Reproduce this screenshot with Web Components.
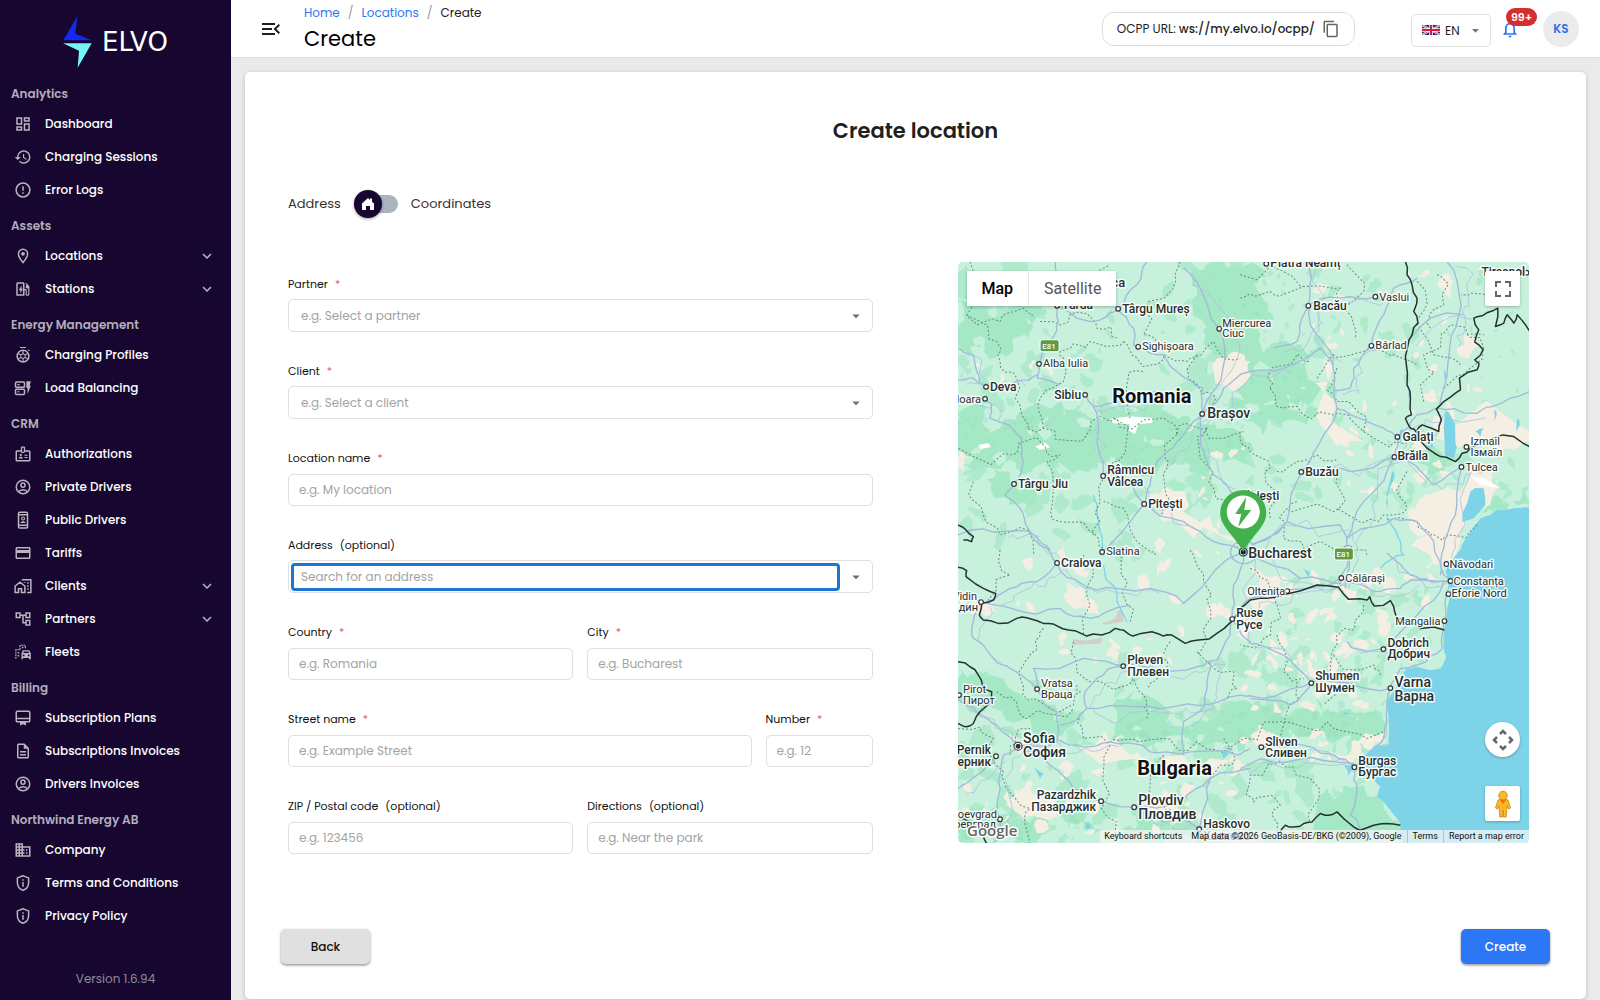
<!DOCTYPE html>
<html lang="en">
<head>
<meta charset="utf-8">
<title>Create location - Elvo</title>
<style>
  body { margin: 0; font-family: Poppins, Inter, "Noto Sans", sans-serif; font-size: 12px; color: #1f1f1f; background: #eaeaea; }
</style>
</head>
<body>
<elvo-app></elvo-app>
<script>
const define = (name, markup, setup) => customElements.define(name, class extends HTMLElement {
  connectedCallback() {
    if (this.shadowRoot) return;
    const root = this.attachShadow({ mode: 'open' });
    const t = document.createElement('template');
    t.innerHTML = '<style>*{box-sizing:border-box}button,input,select{font:inherit;color:inherit;margin:0}</style>' +
      (typeof markup === 'function' ? markup(this) : markup);
    root.append(t.content.cloneNode(true));
    if (setup) setup(this, root);
  }
});

/* ---------- icons (24 unit grid) ---------- */
const s = 'fill="none" stroke="currentColor" stroke-width="2"';
const person = `<circle cx="12" cy="12" r="9" ${s}/><circle cx="12" cy="9.5" r="2.7" ${s}/><path d="M6 18.500c1.500-2.300 3.500-3 6-3s4.500.7 6 3" ${s}/>`;
const shield = `<path d="M12 2.300 4.500 5.200v6c0 4.800 3.100 8.900 7.500 10.400 4.400-1.500 7.500-5.600 7.500-10.400v-6z" ${s}/><path d="M11 10.500h2V17h-2zM11 7h2v2h-2z"/>`;
const ICONS = {
  dashboard: '<path d="M19 5v2h-4V5h4M9 5v6H5V5h4m10 8v6h-4v-6h4M9 17v2H5v-2h4M21 3h-8v6h8V3zM11 3H3v10h8V3zm10 8h-8v10h8V11zm-10 4H3v6h8v-6z"/>',
  history: '<path d="M13 3a9 9 0 0 0-9 9H1l3.890 3.890.070.140L9 12H6c0-3.870 3.130-7 7-7s7 3.130 7 7-3.130 7-7 7c-1.930 0-3.680-.790-4.940-2.060l-1.420 1.420A8.954 8.954 0 0 0 13 21a9 9 0 0 0 0-18zm-1 5v5l4.280 2.540.720-1.210-3.500-2.080V8H12z"/>',
  error: `<circle cx="12" cy="12" r="9.200" ${s}/><path d="M11 7h2v6h-2zM11 15h2v2h-2z"/>`,
  place: `<path d="M12 2.900a6.100 6.100 0 0 0-6.100 6.100c0 4.700 6.100 11.700 6.100 11.700s6.100-7 6.100-11.700A6.100 6.100 0 0 0 12 2.900z" ${s}/><circle cx="12" cy="9" r="2.500"/>`,
  station: `<path d="M19.770 7.230l.010-.010-3.720-3.720L15 4.560l2.110 2.110c-.940.360-1.610 1.260-1.610 2.330 0 1.380 1.120 2.500 2.500 2.500.360 0 .690-.080 1-.210v7.210c0 .550-.450 1-1 1s-1-.450-1-1V14c0-1.100-.900-2-2-2h-1V5c0-1.100-.900-2-2-2H5c-1.100 0-2 .900-2 2v16h11v-7.500h1.500v5c0 1.380 1.120 2.500 2.500 2.500s2.500-1.120 2.500-2.500V9c0-.690-.280-1.320-.730-1.770zM12 19H5V5h7z"/><path d="M8.500 18v-4.500h-2L10 6.500v5h2z"/>`,
  profile: `<circle cx="12" cy="13.500" r="7.800" ${s}/><circle cx="12" cy="13.500" r="3" fill="none" stroke="currentColor" stroke-width="1.300"/><path d="M8 2h8M19 5l1.500 1.500M12 6v5M5.500 10l4 2M5.500 17.500l4-2.500M12 21v-5M18.500 17.500l-4-2.500M18.500 10l-4 2" fill="none" stroke="currentColor" stroke-width="1.500"/>`,
  load: `<rect x="2" y="4" width="12" height="7" rx="1.500" ${s}/><rect x="2" y="13.500" width="12" height="7" rx="1.500" ${s}/><path d="M4.500 6.800h3v1.600h-3zM4.500 16.200h3v1.600h-3zM16.500 3h6l-1.700 6h1.700L18 20v-8h-1.500z"/>`,
  badge: `<path d="M10 8H4c-.6 0-1 .4-1 1v11c0 .6.4 1 1 1h16c.6 0 1-.4 1-1V9c0-.6-.4-1-1-1h-6" ${s}/><rect x="10" y="2.800" width="4" height="7" rx="1" fill="none" stroke="currentColor" stroke-width="1.700"/><circle cx="9" cy="13.300" r="1.500"/><path d="M6 18c0-1.600 1.500-2.200 3-2.200s3 .6 3 2.200zM14 13h4v1.400h-4zM14 16h4v1.400h-4z"/>`,
  person,
  kiosk: `<rect x="6" y="1.500" width="12" height="21" rx="1.500" ${s}/><path d="M6 4h12v2H6zM6 18h12v2H6z"/><circle cx="12" cy="10" r="2" fill="none" stroke="currentColor" stroke-width="1.500"/><path d="M8.500 16c.5-3 6.500-3 7 0z"/>`,
  card: '<path d="M20 4H4c-1.110 0-2 .890-2 2v12c0 1.110.890 2 2 2h16c1.110 0 2-.890 2-2V6c0-1.110-.890-2-2-2zm0 14H4v-6h16v6zm0-10H4V6h16v2z"/>',
  homework: `<path d="M1.500 20.500v-8.500l6.500-5 6.500 5v8.500h-4.500v-5H6v5z" ${s}/><path d="M10.500 3.800h12v16.700h-5" ${s}/><path d="M17.500 7h2v2h-2zM17.500 11h2v2h-2zM17.500 15h2v2h-2zM13 7h2v1h-2z"/>`,
  tree: '<path d="M22 11V3h-7v3H9V3H2v8h7V8h2v10h4v3h7v-8h-7v3h-2V8h2v3h7zM7 9H4V5h3v4zm10 6h3v4h-3v-4zm0-10h3v4h-3V5z"/>',
  fleet: `<path d="M2.500 21V9H8M8 9V3h7v5" fill="none" stroke="currentColor" stroke-width="1.500" stroke-dasharray="2.500 1"/><path d="M10.500 5h2v2h-2zM5 12h2v2H5zM5 16h2v2H5z"/><path d="m10 14 1.700-4.300h8.600L22.500 14v7.500H20V20h-8v1.500h-2z"/><path d="m12.300 13.300.8-2h6l.8 2z" fill="#170730"/><circle cx="12.800" cy="16.500" r="1.200" fill="#170730"/><circle cx="19.600" cy="16.500" r="1.200" fill="#170730"/>`,
  plan: `<rect x="3" y="3" width="18" height="14" rx="1.500" ${s}/><path d="M3 11.500h18v2H3zM8 16h8v6l-4-1.800L8 22z"/>`,
  doc: '<path d="M8 16h8v2H8zm0-4h8v2H8zm6-10H6c-1.100 0-2 .9-2 2v16c0 1.100.890 2 2 2h12c1.100 0 2-.9 2-2V8l-6-6zm4 18H6V4h7v5h5v11z"/>',
  company: '<path d="M12 7V3H2v18h20V7H12zM6 19H4v-2h2v2zm0-4H4v-2h2v2zm0-4H4V9h2v2zm0-4H4V5h2v2zm4 12H8v-2h2v2zm0-4H8v-2h2v2zm0-4H8V9h2v2zm0-4H8V5h2v2zm10 12h-8v-2h2v-2h-2v-2h2v-2h-2V9h8v10zm-2-8h-2v2h2v-2zm0 4h-2v2h2v-2z"/>',
  shield,
  expand: '<path d="M16.590 8.590 12 13.170 7.410 8.590 6 10l6 6 6-6z"/>',
  collapse: '<path d="M3 18h13v-2H3v2zm0-5h10v-2H3v2zm0-7v2h13V6H3zm18 9.590L17.420 12 21 8.410 19.590 7l-5 5 5 5L21 15.590z"/>',
  bell: '<path d="M12 22c1.100 0 2-.9 2-2h-4c0 1.100.9 2 2 2zm6-6v-5c0-3.070-1.630-5.640-4.500-6.320V4c0-.830-.670-1.500-1.500-1.500s-1.500.670-1.500 1.500v.680C7.640 5.360 6 7.920 6 11v5l-2 2v1h16v-1l-2-2zm-2 1H8v-6c0-2.480 1.510-4.500 4-4.500s4 2.020 4 4.500v6z"/>',
  copy: '<path d="M16 1H4c-1.100 0-2 .9-2 2v14h2V3h12V1zm3 4H8c-1.100 0-2 .9-2 2v14c0 1.100.9 2 2 2h11c1.100 0 2-.9 2-2V7c0-1.100-.9-2-2-2zm0 16H8V7h11v14z"/>',
  caret: '<path d="m7 10 5 5 5-5z"/>'
};
const icon = (n, size = 18) => `<svg width="${size}" height="${size}" viewBox="0 0 24 24" fill="currentColor" aria-hidden="true">${ICONS[n]}</svg>`;

/* ---------- sidebar ---------- */
define('nav-item', el => `
  <style>
    :host { display: block; }
    a { display: flex; align-items: center; height: 33px; padding: 0 14px; gap: 13px; color: #fff; font-weight: 500; text-decoration: none; }
    svg { color: #b9b5c0; flex: none; }
    .label { flex: 1; }
  </style>
  <a href="#">${icon(el.getAttribute('icon'))}<span class="label"><slot></slot></span>${el.hasAttribute('more') ? icon('expand', 18) : ''}</a>`);

define('nav-section', el => `
  <style>
    :host { display: block; }
    h2 { margin: 0; padding: 6px 11px 0; font-size: 12px; line-height: 27px; font-weight: 600; color: #b3aebb; }
  </style>
  <h2>${el.getAttribute('heading')}</h2><slot></slot>`);

define('app-sidebar', `
  <style>
    :host { display: flex; flex-direction: column; background: #170730; }
    .logo { display: flex; align-items: center; justify-content: center; gap: 10px; height: 74px; padding-top: 10px; color: #fff; font-family: "DejaVu Sans", sans-serif; font-size: 26px; }
    nav { display: flex; flex-direction: column; margin-right: 1px; }
    footer { margin-top: auto; text-align: center; line-height: 20px; padding-bottom: 11px; color: #8f889b; }
  </style>
  <div class="logo"><svg width="29" height="52" viewBox="173 50 87 154"><path d="M216 50 174 122h85l-49-20z" fill="#1726f5"/><path d="M173 131h86l-42 73 4-51z" fill="#77f4f8"/></svg><span>ELVO</span></div>
  <nav>
    <nav-section heading="Analytics"><nav-item icon="dashboard">Dashboard</nav-item><nav-item icon="history">Charging Sessions</nav-item><nav-item icon="error">Error Logs</nav-item></nav-section>
    <nav-section heading="Assets"><nav-item icon="place" more>Locations</nav-item><nav-item icon="station" more>Stations</nav-item></nav-section>
    <nav-section heading="Energy Management"><nav-item icon="profile">Charging Profiles</nav-item><nav-item icon="load">Load Balancing</nav-item></nav-section>
    <nav-section heading="CRM"><nav-item icon="badge">Authorizations</nav-item><nav-item icon="person">Private Drivers</nav-item><nav-item icon="kiosk">Public Drivers</nav-item><nav-item icon="card">Tariffs</nav-item><nav-item icon="homework" more>Clients</nav-item><nav-item icon="tree" more>Partners</nav-item><nav-item icon="fleet">Fleets</nav-item></nav-section>
    <nav-section heading="Billing"><nav-item icon="plan">Subscription Plans</nav-item><nav-item icon="doc">Subscriptions Invoices</nav-item><nav-item icon="person">Drivers Invoices</nav-item></nav-section>
    <nav-section heading="Northwind Energy AB"><nav-item icon="company">Company</nav-item><nav-item icon="shield">Terms and Conditions</nav-item><nav-item icon="shield">Privacy Policy</nav-item></nav-section>
  </nav>
  <footer>Version 1.6.94</footer>`);

/* ---------- top bar ---------- */
define('app-topbar', `
  <style>
    :host { display: flex; align-items: center; height: 58px; padding: 0 21px 0 28px; background: #fff; border-bottom: 1px solid #dfdfdf; }
    button { border: 0; background: none; padding: 0; display: flex; cursor: pointer; }
    .title { margin-left: 21px; flex: 1; }
    .crumbs { display: flex; gap: 8px; line-height: 20px; color: #9a9a9a; }
    .crumbs a { color: #2f74f2; text-decoration: none; }
    .crumbs b { font-weight: 400; color: #222; }
    h1 { margin: 0; font-size: 21px; line-height: 31px; font-weight: 400; color: #000; }
    .url { display: flex; align-items: center; height: 34px; padding: 0 14px; border: 1px solid #dcdcdc; border-radius: 12px; gap: 3px; }
    .url strong { font-weight: 500; }
    .url button { color: #666; margin-left: 4px; }
    .lang { display: flex; align-items: center; height: 33px; width: 80px; margin: 3px 9px 0 56px; padding: 0 6px 0 10px; border: 1px solid #dfdfdf; border-radius: 5px; }
    .lang select { appearance: none; border: 0; background: none; outline: 0; padding: 0 0 0 5px; flex: 1; min-width: 0; }
    .lang svg:last-child { color: #777; }
    .bell { position: relative; color: #2f74f2; margin-right: 23px; }
    .bell span { position: absolute; left: 6px; top: -11px; width: 31px; height: 18px; border-radius: 9px; background: #d32f2f; color: #fff; font-size: 11px; line-height: 18px; font-weight: 600; text-align: center; }
    .avatar { width: 36px; height: 36px; border-radius: 50%; background: #ebebeb; color: #2f6ff0; font-weight: 600; align-items: center; justify-content: center; }
  </style>
  <button aria-label="Collapse menu">${icon('collapse', 24)}</button>
  <div class="title">
    <nav class="crumbs"><a href="#">Home</a><span>/</span><a href="#">Locations</a><span>/</span><b>Create</b></nav>
    <h1>Create</h1>
  </div>
  <div class="url"><span>OCPP URL:</span><strong>ws://my.elvo.io/ocpp/</strong><button aria-label="Copy">${icon('copy', 18)}</button></div>
  <div class="lang">
    <svg width="18" height="10" viewBox="0 0 36 20"><path fill="#1c2f7c" d="M0 0h36v20H0z"/><path d="m0 0 36 20M36 0 0 20" stroke="#fff" stroke-width="4"/><path d="m0 0 36 20M36 0 0 20" stroke="#d0203a" stroke-width="1.500"/><path d="M18 0v20M0 10h36" stroke="#fff" stroke-width="7"/><path d="M18 0v20M0 10h36" stroke="#d0203a" stroke-width="4"/></svg>
    <select aria-label="Language"><option>EN</option></select>${icon('caret', 17)}
  </div>
  <button class="bell" aria-label="Notifications">${icon('bell', 20)}<span>99+</span></button>
  <button class="avatar">KS</button>`);

/* ---------- form pieces ---------- */
define('form-field', el => {
  const a = n => el.getAttribute(n);
  const kind = a('kind') || 'text';
  const mark = el.hasAttribute('required') ? '<i>*</i>' : el.hasAttribute('optional') ? '<span>(optional)</span>' : '';
  const control = kind === 'select'
    ? `<select id="c"><option>${a('placeholder')}</option></select>${icon('caret', 18)}`
    : kind === 'search'
    ? `<input id="c" type="text" placeholder="${a('placeholder')}"><button aria-label="Open">${icon('caret', 18)}</button>`
    : `<input id="c" type="text" placeholder="${a('placeholder')}">`;
  return `
  <style>
    :host { display: flex; flex-direction: column; justify-content: space-between; height: 57px; min-width: 0; }
    label { display: flex; gap: 7px; font-size: 11px; line-height: 18px; color: #111; }
    i { font-style: normal; color: #f25555; }
    .box { display: flex; align-items: center; height: 32px; border: 1px solid #dfdfdf; border-radius: 5px; color: #6f6f6f; background: #fff; }
    .select, .search { height: 33px; }
    input, select { flex: 1; min-width: 0; height: 30px; padding: 0 10px; border: 0; outline: 0; background: none; appearance: none; color: #a3a3a3; border-radius: 5px; }
    input::placeholder { color: #a3a3a3; opacity: 1; }
    select { padding-left: 12px; }
    svg { margin-right: 7px; flex: none; display: block; }
    button { border: 0; background: none; padding: 0; }
    .search input { height: 28px; margin: 0 7px 0 2px; padding: 0 7px; border: 3px solid #1b76d3; border-radius: 4px; }
  </style>
  <label for="c">${a('label')}${mark}</label>
  <div class="box ${kind}">${control}</div>`;
});

define('mode-switch', `
  <style>
    :host { display: flex; align-items: center; gap: 13px; height: 28px; font-size: 13px; color: #333; }
    .switch { position: relative; display: block; width: 44px; height: 28px; }
    input { position: absolute; left: 10px; top: 5px; width: 34px; height: 18px; appearance: none; border-radius: 9px; background: #a9b4be; }
    .thumb { position: absolute; left: 0; top: 0; width: 28px; height: 28px; border-radius: 50%; background: #170730; box-shadow: 0 1px 3px #0006; pointer-events: none; display: flex; align-items: center; justify-content: center; }
  </style>
  <label for="m"><slot name="off"></slot></label>
  <span class="switch"><input id="m" type="checkbox" role="switch"><span class="thumb"><svg width="14" height="14" viewBox="0 0 14 14"><path d="M7 1 1 6.500V13h4V9h4v4h4V6.500l-2-1.800V1.500H9V3z" fill="#fff"/></svg></span></span>
  <label for="m"><slot name="on"></slot></label>`);

define('action-button', `
  <style>
    :host { display: block; }
    button { width: 89px; height: 35px; border: 0; border-radius: 5px; background: var(--face, #e0e0e0); color: var(--ink, #111); font-weight: 500; box-shadow: 0 1px 3px #0005, 0 2px 2px #0002; }
  </style>
  <button><slot></slot></button>`);

/* ---------- map ---------- */
/* Terrain coordinates use three units per pixel; labels use plain pixels. */
let seed = 11;
const rnd = () => (seed = (seed * 16807) % 2147483647) / 2147483647;
const rough = (pts, amp, closed, depth = 2) => {
  let p = [];
  for (let i = 0; i < pts.length; i += 2) p.push([pts[i], pts[i + 1]]);
  for (let d = 0; d < depth; d++) {
    const q = [];
    const n = closed ? p.length : p.length - 1;
    for (let i = 0; i < n; i++) {
      const a = p[i], b = p[(i + 1) % p.length];
      const len = Math.hypot(a[0] - b[0], a[1] - b[1]);
      q.push(a, [(a[0] + b[0]) / 2 + (rnd() - .5) * len * amp, (a[1] + b[1]) / 2 + (rnd() - .5) * len * amp]);
    }
    if (!closed) q.push(p[p.length - 1]);
    p = q;
  }
  return 'M' + p.map(v => v.map(Math.round).join(' ')).join('L') + (closed ? 'z' : '');
};
const scatter = (x0, y0, x1, y1, n, size) => {
  let d = '';
  for (let i = 0; i < n; i++) {
    const cx = x0 + rnd() * (x1 - x0), cy = y0 + rnd() * (y1 - y0), rx = size * (.3 + rnd()), ry = rx * (.3 + rnd() * .5), tilt = rnd() * 3;
    const pts = [];
    for (let k = 0; k < 7; k++) {
      const t = k / 7 * Math.PI * 2, r = .55 + rnd() * .7, x = Math.cos(t) * rx * r, y = Math.sin(t) * ry * r;
      pts.push(cx + x * Math.cos(tilt) - y * Math.sin(tilt), cy + x * Math.sin(tilt) + y * Math.cos(tilt));
    }
    d += rough(pts, .5, true, 1);
  }
  return d;
};
const shift = (dx, dy, arr) => arr.map((v, i) => v + (i % 2 ? dy : dx));

const FOREST = [
  [24,500,110,460,150,520,230,460,330,440,400,475,490,455,600,455,700,480,740,500,850,520,900,560,890,630,780,640,700,600,640,620,560,650,480,600,420,650,330,620,240,650,170,620,80,660,24,640],
  [24,140,60,120,110,160,130,190,270,160,290,180,240,230,190,290,150,300,100,270,60,300,24,270],
  [720,40,860,30,960,60,970,180,930,240,960,300,1000,330,980,400,1105,480,1000,500,940,540,880,490,840,400,820,300,760,230,740,120],
  [500,1370,640,1350,760,1400,860,1340,960,1350,1100,1370,1200,1380,1290,1400,1315,1430,1200,1440,1100,1430,1000,1440,900,1460,800,1460,700,1440,600,1470,480,1450],
  [24,1240,110,1270,220,1330,320,1370,380,1400,240,1390,120,1350,24,1330],
  [24,1690,100,1650,200,1690,330,1670,420,1700,480,1764,24,1764],
  [600,1700,700,1680,820,1740,830,1764,500,1764,520,1720],
  [1130,1600,1240,1590,1310,1670,1350,1730,1350,1764,1200,1764,1100,1740],
  [1590,790,1640,720,1737,690,1737,757,1640,765],
  [960,270,1080,300,1110,390,1080,480,1000,440,940,360],
  [130,640,260,690,230,760,120,700], [1380,570,1470,590,1480,650,1430,660],
  [1320,1310,1300,1350,1310,1450,1180,1390,1100,1330,1200,1360]
];
const BEIGE = [
  [1400,740,1490,700,1560,640,1640,640,1640,700,1560,780,1530,860,1500,940,1450,930,1380,870,1430,840,1370,760],
  [800,310,850,290,900,320,890,380,820,390], [1120,320,1150,330,1140,500,1240,560,1110,510], [590,720,640,690,700,770,800,820,870,880,730,850,640,800],
  [180,1590,260,1620,340,1660,250,1680,170,1650], [380,1470,500,1455,560,1490,700,1500,860,1490,860,1520,700,1530,560,1510],
  [560,1640,640,1600,680,1700,620,1690], [24,590,80,600,40,650,24,640], [900,930,980,960,1000,1010,940,1080,890,1030],
  [1450,480,1737,530,1737,560,1680,580,1600,580,1500,550], [1480,60,1510,80,1500,130,1470,100], [1540,240,1580,260,1560,300,1520,280],
  [350,980,400,1000,410,1060,370,1060], [480,1150,510,1170,500,1220,470,1190], [1470,500,1510,510,1480,560,1440,530]
];
/* The open-water side runs past the frame so that only the coast shows. */
const SEA = [1960,757,1850,755,1737,757,1680,762,1640,765,1590,790,1560,830,1530,885,1510,910,1485,950,1500,1000,1490,1060,1482,1120,1480,1180,1487,1205,1470,1240,1440,1245,1400,1235,1370,1240,1350,1270,1340,1290,1310,1340,1315,1400,1315,1470,1280,1472,1250,1500,1240,1530,1270,1575,1290,1595,1280,1625,1320,1665,1350,1705,1355,1764,1360,1960,1960,1960];
const LAKES = [
  [1560,710,1600,700,1605,750,1570,790,1535,800,1550,745],
  [1484,470,1494,470,1515,560,1510,610,1485,605],[1425,560,1445,545,1450,575,1430,580],[1630,465,1638,470,1632,500],[1700,490,1708,510,1696,530],
  [1575,530,1600,520,1590,545],[1325,650,1333,655,1318,700,1312,760,1308,720],[1480,340,1490,360,1482,375],[1372,405,1382,415,1374,430],
  [250,1535,280,1555,270,1570],[410,1700,425,1712,408,1725],[1180,1530,1215,1525,1195,1560],[1060,940,1078,950,1075,965],[1350,525,1362,525,1352,570],
  [810,1490,835,1490,820,1510],[1178,1370,1200,1375,1185,1380]
];
const ROADS = [
  [316,21,316,90,320,155,325,200,300,260,270,320,262,370,330,390],[320,155,380,190,450,195,505,165,450,120,360,70],[505,165,560,90,590,21],
  [505,162,550,220,550,270,640,300,680,350,757,400,757,476],[24,375,70,370,107,395,200,380,262,360],[24,280,70,300,90,380],[24,430,107,432,125,450,120,490,215,550,220,620,193,686,165,720,210,760,240,830,300,885],
  [405,419,430,455,440,560,459,664],[430,455,500,440,620,410],[459,664,500,660,582,747,700,800,790,860,881,890],[757,476,700,540,650,590,620,620,600,690,582,747,540,800,457,890],
  [757,476,750,570,780,640,830,690,881,750,890,890],[757,476,820,400,900,350,1000,340,1110,280,1150,330],[806,221,820,330,757,476],[806,221,750,100,700,40],
  [1073,21,1075,152,1080,210,1150,310,1150,400,1160,460,1120,540,1054,651,1010,800,881,890],[1075,152,1040,260,970,280],[1150,405,1200,400,1210,340,1262,272,1300,180,1330,100,1400,70],
  [1075,152,1170,130,1275,125],[1331,605,1240,740,1190,850,1190,885,1185,1000],[1054,651,1200,650,1331,605,1342,547,1300,520,1200,480,1160,460],[881,890,1010,800,1170,810,1190,850,1330,790,1400,800,1450,860,1480,960,1499,978],
  [1534,637,1515,780,1480,880,1470,960],[1342,547,1400,480,1460,460,1580,475,1640,450,1737,410],[1534,637,1450,690,1340,600],[1490,21,1530,140,1520,200,1500,260,1480,400,1470,450],[1370,260,1440,190,1540,180],
  [321,925,260,980,180,1000,130,1035,94,1040],[321,925,400,990,500,1000,600,1000,700,1045,881,890],[321,925,290,880,240,830,150,830,24,840],[1190,885,1170,985,1050,970,881,890],[1174,968,1270,1010,1350,1000,1380,975,1499,978],
  [1310,895,1380,960,1440,980,1499,978,1490,1010,1480,1099,1476,1180,1400,1230,1350,1240,1319,1300],[94,1040,70,1100,70,1150,130,1210,180,1240,262,1301,320,1370,320,1460,205,1472],
  [24,1330,80,1370,140,1410,205,1472,300,1530,370,1600,452,1637,551,1657,700,1630,780,1570,900,1540],[205,1472,300,1450,400,1475,480,1460,600,1490,720,1490,860,1500,900,1480],
  [205,1472,160,1500,150,1600,150,1692,130,1764],[518,1232,440,1270,405,1310,410,1360,330,1410],[410,1360,560,1355,640,1360,760,1350,870,1320,940,1330,1083,1283],[518,1232,600,1240,740,1235,800,1215,840,1140,846,1093],
  [780,1220,770,1300,765,1350,700,1400,700,1500],[846,1093,870,1130,900,1165,1000,1200,1083,1283,1200,1285,1319,1300],[1319,1300,1310,1360,1300,1450,1250,1500,1211,1536],[934,1477,1060,1470,1150,1500,1211,1536,1220,1600,1200,1680,1230,1720],
  [870,1540,934,1510,1060,1510,1211,1525],[551,1657,640,1700,700,1690,747,1723,780,1570],[881,890,850,990,846,1093],[846,1093,900,1030,1000,1005,1174,968],[24,1600,80,1560,140,1505],[1299,1181,1210,1180,1190,1160],
  [1083,1283,1020,1350,900,1330],[1299,1181,1400,1080,1480,980],[94,1040,200,1065,330,1060,420,1090,540,1050],[262,1301,250,1240,400,1210,518,1232]
];
const COUNTIES = [
  [60,21,50,180,150,200,220,160,250,190],[50,180,140,260,150,320,200,370,215,480,280,520,420,525,500,490,640,490,680,540,770,520,820,550,880,530],[280,520,270,430,340,380,330,290,420,260,520,260],
  [270,200,360,180,440,220,500,250],[520,260,560,310,640,300,720,310,790,260,870,310],[690,21,670,100,590,160,580,240,640,290],[540,490,530,390,580,350],[740,300,730,380,790,420,800,490],
  [24,500,60,600,180,600,280,570,330,600,310,700,330,800,420,830,460,880],[490,490,490,620,450,740,430,840],[460,740,520,760,560,860,620,900],[680,540,650,640,660,740,630,780],[770,520,750,610,790,700,850,760,860,880],[70,680,100,780,150,840,240,840,250,900],
  [870,130,960,110,1060,95,1170,100,1180,160,1210,250],[1100,370,1150,300,1240,290,1330,300,1400,330],[960,400,960,340,1080,320],[960,400,1000,460,1060,480,1150,480,1240,530,1340,560,1370,560],[1160,340,1160,440,1240,530],[870,530,900,590,960,640,980,740,960,790],
  [980,650,1050,620,1100,600,1160,610],[1160,670,1150,770,1010,760],[1370,650,1370,760,1300,780,1160,760],[1310,790,1400,800,1440,840,1500,840,1580,810],[1040,740,1000,850,1060,880,1200,870,1250,900],[1400,80,1410,180,1450,300,1530,330],[1420,440,1420,300,1500,210,1600,240],
  [1480,400,1560,340,1600,280,1550,240],[150,885,180,960,110,1040],[400,900,430,960,420,1050,400,1140],[560,885,530,990,540,1100],[720,885,760,960,780,1060,760,1130,740,1200],[280,1120,260,1180,220,1230,230,1330,320,1370,370,1350,380,1290],
  [370,1160,380,1250,420,1280,550,1270,590,1340,590,1390],[660,1160,650,1240,590,1300],[740,1190,850,1250,860,1300,830,1330],[140,1310,200,1340,230,1390,370,1360],[400,1370,400,1450,500,1455,640,1450,740,1460,880,1450,1000,1400,1130,1400,1300,1430],
  [24,1420,130,1450,160,1550,240,1660,240,1764],[480,1470,470,1600,500,1700,490,1764],[180,1500,200,1440,240,1420],[640,1500,640,1640,720,1700],[820,1450,840,1530,780,1570],[900,940,960,1000,960,1140,870,1170],
  [1240,1050,1230,1080,1180,1120,1150,1180,1170,1280],[980,1140,1000,1250,1060,1270],[1040,1280,1010,1370,1000,1530,1080,1570,1080,1700],[1150,1200,1270,1230,1290,1260],[990,1520,900,1560,910,1640,990,1650,980,1730],[1170,1250,1120,1350],
  [360,90,430,60,480,30],[870,60,1000,50,1060,95],[1190,30,1240,110,1180,160],[1460,60,1480,150,1440,220],[1540,120,1620,90,1700,110]
];
const BORDERS = [
  shift(870,0,[495,21,500,60,515,90,530,130,520,170,533,205,515,240,503,270,498,330,500,390,510,430,513,480,495,490,510,520,527,530,545,510,595,530,603,495,588,462,610,440,645,415,660,405,657,370,710,345,715,325,703,315,703,315,728,285,703,262,715,225,700,190,725,183,750,170,772,160,765,215,790,205,800,180,820,205,830,180,855,210,867,228]),
  shift(870,0,[527,530,560,580,600,605,645,620,665,595,690,580,760,550,820,545,867,575]),
  shift(0,885,[24,52,50,62,48,80,100,115,137,130,130,150,95,160,88,195,100,210,145,220,200,205,230,203,280,220,310,222,355,240,410,258,455,255,495,235,520,240,548,258,605,245,640,258,665,255,705,280,745,270,800,250,850,208,870,175,900,150,950,145,1010,132,1100,105,1165,112,1195,148,1250,150,1258,140,1272,168,1320,152,1330,170,1340,205,1410,235,1482,240]),
  shift(0,885,[24,335,60,350,85,375,100,415,125,425,118,460,90,485,70,520,50,530,24,520]),
  shift(870,885,[120,845,135,825,160,830,190,820,215,815,240,790,265,795,290,785,310,805,340,830,360,840,400,825,435,820,480,825]),
  [24,810,45,822,70,845,65,860,40,855], shift(0,885,[24,800,60,815,100,860,110,880])
];
/* text | x | baseline | size | anchor end? | marker x | marker y */
const PLACES = [
  ['Cluj-Napoca',167,25,13,1],['Turda',104,47,12,0,99,44],['Târgu Mureș',164,51,12,0,160,47],['Miercurea',264,65,11,0,261,67],['Ciuc',264,75,11],['Sighișoara',184,88,11,0,180,85],
  ['Alba Iulia',85,105,11,0,81,102],['Deva',32,129,12,0,28,125],['Sibiu',123,137,12,1,127,133],['Hunedoara',23,141,11,1,27,137],['Brașov',249,156,14,0,244,152],
  ['Râmnicu',149,212,12,0,145,214],['Vâlcea',149,224,12],['Târgu Jiu',60,226,12,0,56,222],['Pitești',190,246,12,0,186,242],['Slatina',148,293,11,0,144,290],
  ['Piatra Neamț',312,5,12,0,308,2],['Bacău',355,48,12,0,350,44],['Vaslui',421,39,11,0,417,35],['Bârlad',417,87,11,0,413,84],['Tiraspol',523,14,12,0,568,11],['Galați',444,179,12,0,439,175],
  ['Brăila',439,198,12,0,436,195],['Izmail',512,183,11,0,508,185],['Ізмаїл',512,194,11],['Tulcea',507,209,11,0,503,205],['Buzău',347,214,12,0,343,210],['Ploiești',321,238,12,1],['Bucharest',290,296,14],
  ['Craiova',103,305,12,0,99,301],['Vidin',19,338,11,1,23,340],['Видин',20,349,11,1],['Pleven',169,402,12,0,165,404],['Плевен',169,414,12],['Vratsa',83,425,11,0,79,427],['Враца',83,436,11],
  ['Pirot',5,431,11,0,1,433],['Пирот',5,442,11],['Sofia',65,481,14],['София',65,495,14],['Pernik',33,492,12,1,38,494],['Перник',33,504,12,1],['Pazardzhik',138,537,12,1,143,539],['Пазарджик',138,549,12,1],
  ['Plovdiv',180,543,14,0,176,545],['Пловдив',180,557,14],['Blagoevgrad',39,556,11,1,42,557],['Благоевград',38,566,11,1],['Haskovo',245,566,12,0,241,567],['Хасково',245,578,12],
  ['Năvodari',491,306,11,0,488,302],['Constanța',495,323,11,0,492,319],['Eforie Nord',493,335,11,0,490,332],['Călărași',387,320,11,0,383,316],['Oltenița',289,333,11,0,329,329],['Mangalia',482,363,11,1,486,359],
  ['Ruse',278,355,12,0,274,357],['Русе',278,367,12],['Dobrich',429,385,12,0,425,387],['Добрич',429,396,12],['Shumen',357,418,12,0,353,421],['Шумен',357,430,12],['Varna',436,425,14,0,432,426],['Варна',436,439,14],
  ['Sliven',307,484,12,0,303,485],['Сливен',307,495,12],['Burgas',400,503,12,0,396,505],['Бургас',400,514,12]
];
const paths = (list, attrs, amp, closed, depth) => `<path ${attrs} d="${list.map(p => rough(p, amp, closed, depth)).join('')}"/>`;
const shieldSign = (x, y) => `<rect x="${x}" y="${y}" width="19" height="12" rx="2" fill="#5c9a45" stroke="#fff"/><text x="${x + 9}" y="${y + 9}" font-size="8" text-anchor="middle" class="sign">E81</text>`;

function terrain() {
  return `
  <g transform="translate(-8 -7) scale(.33333)">
    <path d="M24 21h1713v1743H24z" fill="#c8f1dd"/>
    <path fill="#aeeacb" d="${scatter(30,30,300,440,40,40)}${scatter(300,30,700,430,14,30)}${scatter(30,430,900,900,60,42)}${scatter(700,30,900,430,20,40)}${scatter(900,30,1400,760,50,30)}${scatter(30,1200,1300,1764,130,42)}${scatter(870,960,1450,1300,60,26)}${scatter(1400,500,1700,760,28,26)}${scatter(1400,30,1737,450,20,14)}"/>
    ${paths(FOREST, 'fill="#a5e8c5"', .7, true, 3)}
    <path fill="#94dfb8" opacity=".4" d="${scatter(30,480,880,620,70,14)}${scatter(760,60,1080,480,50,14)}${scatter(480,1350,1280,1450,60,14)}${scatter(30,1690,420,1764,25,16)}"/>
    <path fill="#c8f1dd" d="${scatter(30,60,900,650,40,24)}${scatter(300,1300,1300,1480,30,16)}${scatter(900,60,1100,520,14,20)}"/>
    ${paths(BEIGE, 'fill="#f5efe3"', .7, true, 2)}
    <path fill="#f5efe3" d="${scatter(30,860,870,1100,18,26)}${scatter(880,960,1320,1360,70,26)}${scatter(30,1440,870,1740,44,24)}${scatter(1180,420,1500,720,26,24)}${scatter(1370,30,1640,420,14,16)}${scatter(870,1430,1300,1520,24,26)}${scatter(700,500,900,900,14,20)}${scatter(60,300,350,420,6,20)}${scatter(1360,780,1530,1060,14,22)}${scatter(260,1120,860,1240,10,20)}${scatter(1080,100,1180,320,8,18)}"/>
    <path fill="#d2cfcb" d="M455 1105l40-15 10-25 12 5 3 30-60 10zM368 1152l40 5 50-10-5 18-85 5z"/>
    <path fill="#fff" d="M480 492l60-8 70 5-5 15-40 3-10 30-20-10 3-20-50-2zM85 570l30-6 8 12-30 6zM255 575l30-12 15 14-30 8zM1560 665l40 5 50 30-60-10z"/>
    ${paths([SEA], 'fill="#7dd4e9"', .12, true, 2)}
    ${paths(LAKES, 'fill="#7dd4e9"', .3, true, 1)}
    ${paths([[430,720,445,800,450,900],[460,930,500,1010,530,1100],[1310,790,1350,860,1360,900,1290,940]], 'fill="none" stroke="#7dd4e9" stroke-width="4"', .3, false, 2)}
    ${paths(COUNTIES, 'fill="none" stroke="#5f8273" stroke-width="3" stroke-dasharray="6 6" opacity=".9"', .6, false, 2)}
    ${paths(ROADS, 'fill="none" stroke="#a2b9da" stroke-width="4" stroke-linejoin="round"', .22, false, 2)}
    ${paths(ROADS.map(r => shift(26, 14, r.slice(0, 8))).slice(4, 50), 'fill="none" stroke="#aec3dd" stroke-width="2.500"', .6, false, 2)}
    <ellipse cx="881" cy="892" rx="40" ry="34" fill="none" stroke="#a2b9da" stroke-width="4"/>
    ${paths(BORDERS, 'fill="none" stroke="#25332f" stroke-width="4.500" stroke-linejoin="round"', .25, false, 1)}
  </g>`;
}
define('location-map', () => `
  <style>
    :host { display: block; position: relative; height: 581px; border-radius: 5px; overflow: hidden; font-family: Roboto, sans-serif; background: #c8f1dd; }
    .canvas { display: block; width: 100%; height: 100%; }
    .canvas text { fill: #26302e; stroke: #fff; stroke-opacity: .85; stroke-width: 3px; paint-order: stroke; stroke-linejoin: round; font-weight: 500; }
    .canvas .minor { font-weight: 400; }
    .canvas .country { font-size: 20px; font-weight: 700; fill: #111; }
    .canvas .sign { fill: #fff; stroke: none; }
    .canvas .google { fill: #5f6664; stroke-opacity: 1; font-size: 15px; font-weight: 600; font-family: "Open Sans", sans-serif; }
    button { border: 0; background: #fff; padding: 0; display: flex; align-items: center; justify-content: center; box-shadow: 0 1px 3px #0004; }
    .types { position: absolute; left: 9px; top: 9px; display: flex; box-shadow: 0 1px 3px #0004; font-size: 16px; }
    .types button { height: 35px; padding: 0 15px; color: #565656; box-shadow: none; }
    .types button:first-child { color: #000; font-weight: 500; border-right: 1px solid #e6e6e6; }
    .tools { position: absolute; right: 9px; top: 9px; bottom: 22px; display: flex; flex-direction: column; gap: 29px; }
    .tools button { width: 35px; height: 35px; border-radius: 2px; color: #666; }
    .tools .pan { margin-top: auto; border-radius: 50%; }
    .legal { position: absolute; right: 0; bottom: 0; display: flex; font-size: 9px; line-height: 13px; color: #111; background: #f5f5f5b8; }
    .legal > * { padding: 0 5px; color: inherit; text-decoration: none; }
    .legal a { border-left: 1px solid #8fd2e0; }
    .legal button { box-shadow: none; background: none; padding: 0 4px; }
  </style>
  <svg class="canvas" viewBox="0 0 571 581" preserveAspectRatio="xMidYMid slice">
    ${terrain()}
    ${PLACES.filter(p => p[5]).map(p => `<circle cx="${p[5]}" cy="${p[6]}" r="2.300" fill="#fff" stroke="#333" stroke-width="1.200"/>`).join('')}
    ${PLACES.map(p => `<text x="${p[1]}" y="${p[2]}" font-size="${p[3]}" ${p[3] < 12 ? 'class="minor"' : ''} ${p[4] ? 'text-anchor="end"' : ''}>${p[0]}</text>`).join('')}
    <circle cx="60" cy="484" r="3" fill="#333" stroke="#fff"/><circle cx="60" cy="484" r="4" fill="none" stroke="#333"/>
    <text class="country" x="154" y="141">Romania</text><text class="country" x="179" y="513">Bulgaria</text>
    ${shieldSign(82, 78)}${shieldSign(376, 286)}
    <text class="google" x="9" y="574">Google</text>
    <circle cx="285" cy="290" r="2.500" fill="#222"/><circle cx="285" cy="290" r="4" fill="none" stroke="#222"/>
    <path d="M285 228a23 23 0 0 0-23 23c0 14 15 23 23 39 8-16 23-25 23-39a23 23 0 0 0-23-23z" fill="#43b14b"/>
    <circle cx="285" cy="250" r="16.500" fill="#fff"/><path d="m288 235-11 17h6l-3 13 13-17h-7z" fill="#43b14b"/>
  </svg>
  <div class="types"><button>Map</button><button>Satellite</button></div>
  <div class="tools">
    <button aria-label="Full screen"><svg width="18" height="18" viewBox="0 0 18 18" fill="currentColor"><path d="M1 1h6v2H3v4H1zM11 1h6v6h-2V3h-4zM1 11h2v4h4v2H1zM15 11h2v6h-6v-2h4z"/></svg></button>
    <button class="pan" aria-label="Pan map"><svg width="22" height="22" viewBox="0 0 22 22" fill="none" stroke="currentColor" stroke-width="2.500"><path d="m8 5 3-3 3 3M8 17l3 3 3-3M5 8l-3 3 3 3M17 8l3 3-3 3"/></svg></button>
    <button aria-label="Street View"><svg width="16" height="28" viewBox="0 0 16 28"><path d="M3 10q5-3 10 0l2.500 8-2 1-1.500-3-.8 11h-2.700L8 20l-.5 7H4.800L4 16l-1.500 3-2-1z" fill="#fbb726" stroke="#c68714" stroke-width=".8"/><path d="m5 10 3 4 3-4z" fill="#e8710a"/><circle cx="8" cy="5.500" r="4.300" fill="#fbb726" stroke="#c68714" stroke-width=".8"/></svg></button>
  </div>
  <div class="legal"><button>Keyboard shortcuts</button><span>Map data ©2026 GeoBasis-DE/BKG (©2009), Google</span><a href="#">Terms</a><a href="#">Report a map error</a></div>`);

/* ---------- page ---------- */
define('location-form', `
  <style>
    :host { display: block; padding: 42px 0 35px; background: #fff; border-radius: 5px; box-shadow: 0 1px 4px #0003; }
    h2 { margin: 0 0 43px; text-align: center; font-size: 21px; line-height: 33px; font-weight: 600; }
    mode-switch { margin: 0 43px 44px; }
    .halves { display: grid; grid-template-columns: 1fr 1fr; }
    .fields { display: grid; gap: 30px; padding: 13px 43px 0; align-content: start; }
    .pair { display: grid; grid-template-columns: 1fr 1fr; gap: 14px; }
    .street { grid-template-columns: 13fr 3fr; }
    .map { padding: 0 57px 0 42px; }
    .actions { display: flex; justify-content: space-between; margin: 75px 36px 0; }
    .primary { --face: #2b77f5; --ink: #fff; }
  </style>
  <h2>Create location</h2>
  <mode-switch><span slot="off">Address</span><span slot="on">Coordinates</span></mode-switch>
  <div class="halves">
    <div class="fields">
      <form-field label="Partner" required kind="select" placeholder="e.g. Select a partner"></form-field>
      <form-field label="Client" required kind="select" placeholder="e.g. Select a client"></form-field>
      <form-field label="Location name" required placeholder="e.g. My location"></form-field>
      <form-field label="Address" optional kind="search" placeholder="Search for an address"></form-field>
      <div class="pair"><form-field label="Country" required placeholder="e.g. Romania"></form-field><form-field label="City" required placeholder="e.g. Bucharest"></form-field></div>
      <div class="pair street"><form-field label="Street name" required placeholder="e.g. Example Street"></form-field><form-field label="Number" required placeholder="e.g. 12"></form-field></div>
      <div class="pair"><form-field label="ZIP / Postal code" optional placeholder="e.g. 123456"></form-field><form-field label="Directions" optional placeholder="e.g. Near the park"></form-field></div>
    </div>
    <div class="map"><location-map></location-map></div>
  </div>
  <div class="actions"><action-button>Back</action-button><action-button class="primary">Create</action-button></div>`);

define('elvo-app', `
  <style>
    :host { display: grid; grid-template-columns: 231px 1fr; min-height: 100vh; }
    main { padding: 14px 14px 1px; }
  </style>
  <app-sidebar></app-sidebar>
  <div><app-topbar></app-topbar><main><location-form></location-form></main></div>`);
</script>
</body>
</html>
